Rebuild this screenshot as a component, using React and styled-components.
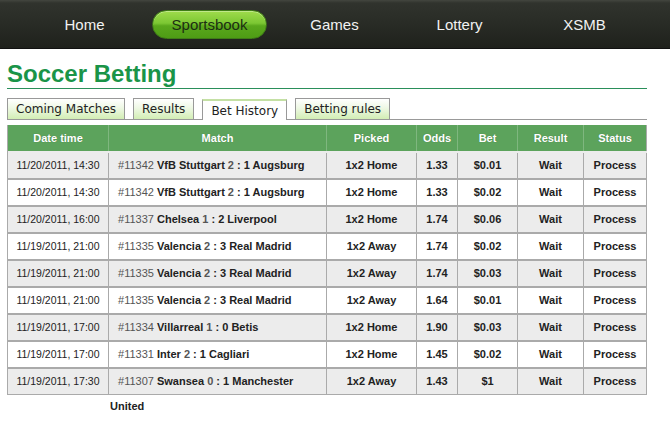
import styled, { createGlobalStyle } from "styled-components";

const GlobalStyle = createGlobalStyle`
  html, body {
    margin: 0;
    min-height: 100%;
    background: #fff;
  }
  body {
    font-family: "Liberation Sans", Arial, sans-serif;
  }
`;

const Page = styled.div`
  min-height: 433px;
`;

const NavBar = styled.div`
  display: flex;
  align-items: center;
  height: 48px;
  padding-left: 22px;
  border-bottom: 1px solid #111;
  background: linear-gradient(#43463f 0px, #30332d 3px, #2a2d27 20px, #1f211c 48px);
`;

const NavItem = styled.a`
  box-sizing: border-box;
  display: flex;
  justify-content: center;
  align-items: center;
  height: 29px;
  width: ${(p) => (p.$active ? "115px" : "125px")};
  margin: ${(p) => (p.$active ? "0 5px" : "0")};
  font-size: 15px;
  color: ${(p) => (p.$active ? "#1c2e12" : "#f2f2f2")};
  border-radius: 15px;
  cursor: pointer;
  ${(p) =>
    p.$active &&
    `
    border: 1px solid #3f7d16;
    background: linear-gradient(#9fdc4c 0%, #7cc733 45%, #5aa81c 55%, #4e9c15 100%);
    box-shadow: inset 0 1px 0 rgba(255,255,255,0.35);
  `}
`;

const Content = styled.div`
  padding-left: 7px;
  width: 640px;
`;

const Title = styled.h1`
  margin: 11px 0 0;
  height: 28px;
  font-size: 24px;
  line-height: 28px;
  font-weight: bold;
  color: #1a9448;
  border-bottom: 1px solid #2a8f5a;
`;

const TabBar = styled.div`
  display: flex;
  align-items: flex-end;
  gap: 8px;
  margin-top: 9px;
  border-bottom: 1px solid #999;
`;

const Tab = styled.div`
  height: 21px;
  box-sizing: border-box;
  padding: 0 8px;
  font-family: "DejaVu Sans", Verdana, sans-serif;
  font-size: 12px;
  line-height: 20px;
  color: #222;
  border: 1px solid #999;
  border-bottom: none;
  background: ${(p) =>
    p.$active ? "#fff" : "linear-gradient(#ffffff 0%, #eef8e4 45%, #d2eeb4 100%)"};
  ${(p) =>
    p.$active &&
    `
    margin-bottom: -1px;
    line-height: 21px;
    border-top: 2px solid #c4e0a4;
  `}
`;

const Table = styled.div`
  margin-top: 5px;
  width: 639px;
  border-left: 1px solid #aaa;
  border-bottom: 1px solid #aaa;
  font-size: 11px;
  color: #222;
`;

const cols = "101px 218px 90px 41px 60px 66px 63px";

const HeadRow = styled.div`
  display: grid;
  grid-template-columns: ${cols};
  height: 26px;
  background: #5ca35c;
`;

const HeadCell = styled.div`
  line-height: 26px;
  text-align: center;
  font-weight: bold;
  color: #fff;
  text-shadow: 0 0 1px rgba(0, 0, 0, 0.25);
  border-right: 1px solid #7fb77f;
  &:last-child { border-right-color: #aaa; }
`;

const Row = styled.div`
  display: flex;
  height: 27px;
  box-sizing: border-box;
  border-top: 2px solid #aaa;
  background: ${(p) => (p.$odd ? "#ececec" : "#fff")};
  &:nth-child(2) { border-top-color: transparent; }
`;

const Cell = styled.div`
  flex: none;
  box-sizing: border-box;
  width: ${(p) => p.$w}px;
  height: 25px;
  line-height: 25px;
  text-align: center;
  font-weight: bold;
  border-right: 1px solid #aaa;
`;

const DateCell = styled(Cell)`
  font-weight: normal;
  font-size: 10.5px;
`;

const MatchCell = styled(Cell)`
  text-align: left;
  padding: 0 4px 0 1px;
  text-indent: 8px;
`;

const MatchNo = styled.span`
  font-weight: normal;
  color: #555;
`;

const Score = styled.span`
  color: #555;
`;

const rows = [
  ["11/20/2011, 14:30", "11342", "VfB Stuttgart", 2, 1, "Augsburg", "1x2 Home", "1.33", "$0.01"],
  ["11/20/2011, 14:30", "11342", "VfB Stuttgart", 2, 1, "Augsburg", "1x2 Home", "1.33", "$0.02"],
  ["11/20/2011, 16:00", "11337", "Chelsea", 1, 2, "Liverpool", "1x2 Home", "1.74", "$0.06"],
  ["11/19/2011, 21:00", "11335", "Valencia", 2, 3, "Real Madrid", "1x2 Away", "1.74", "$0.02"],
  ["11/19/2011, 21:00", "11335", "Valencia", 2, 3, "Real Madrid", "1x2 Away", "1.74", "$0.03"],
  ["11/19/2011, 21:00", "11335", "Valencia", 2, 3, "Real Madrid", "1x2 Away", "1.64", "$0.01"],
  ["11/19/2011, 17:00", "11334", "Villarreal", 1, 0, "Betis", "1x2 Home", "1.90", "$0.03"],
  ["11/19/2011, 17:00", "11331", "Inter", 2, 1, "Cagliari", "1x2 Home", "1.45", "$0.02"],
  ["11/19/2011, 17:30", "11307", "Swansea", 0, 1, "Manchester United", "1x2 Away", "1.43", "$1"],
];

const navLinks = ["Home", "Sportsbook", "Games", "Lottery", "XSMB"];
const tabs = ["Coming Matches", "Results", "Bet History", "Betting rules"];
const heads = ["Date time", "Match", "Picked", "Odds", "Bet", "Result", "Status"];
const widths = [101, 218, 90, 41, 60, 66, 63];

const App = () => {
  return (
    <Page>
      <GlobalStyle />
      <NavBar>
        {navLinks.map((n) => (
          <NavItem key={n} $active={n === "Sportsbook"}>
            {n}
          </NavItem>
        ))}
      </NavBar>
      <Content>
        <Title>Soccer Betting</Title>
        <TabBar>
          {tabs.map((t) => (
            <Tab key={t} $active={t === "Bet History"}>
              {t}
            </Tab>
          ))}
        </TabBar>
        <Table>
          <HeadRow>
            {heads.map((h) => (
              <HeadCell key={h}>{h}</HeadCell>
            ))}
          </HeadRow>
          {rows.map((r, i) => (
            <Row key={i} $odd={i % 2 === 0}>
              <DateCell $w={widths[0]}>{r[0]}</DateCell>
              <MatchCell $w={widths[1]}>
                <MatchNo>#{r[1]}</MatchNo> {r[2]} <Score>{r[3]}</Score> : {r[4]} {r[5]}
              </MatchCell>
              <Cell $w={widths[2]}>{r[6]}</Cell>
              <Cell $w={widths[3]}>{r[7]}</Cell>
              <Cell $w={widths[4]}>{r[8]}</Cell>
              <Cell $w={widths[5]}>Wait</Cell>
              <Cell $w={widths[6]}>Process</Cell>
            </Row>
          ))}
        </Table>
      </Content>
    </Page>
  );
};

export default App;
